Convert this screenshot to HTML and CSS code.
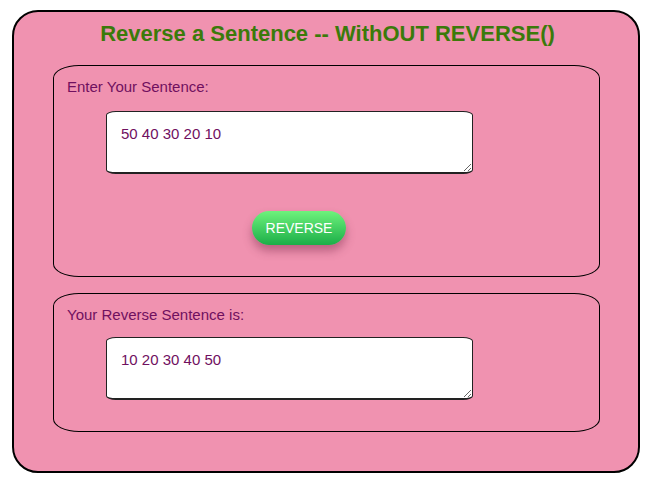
FILE: index.html
```html
<!DOCTYPE html>
<html lang="en">
<head>
<meta charset="utf-8">
<title>Reverse a Sentence</title>
<link rel="stylesheet" href="styles.css">
</head>
<body>
<div class="app">
  <h1 class="title">Reverse a Sentence -- WithOUT REVERSE()</h1>
  <div class="panel panel-input">
    <label class="label" for="src">Enter Your Sentence:</label>
    <textarea id="src" class="field">50 40 30 20 10</textarea>
    <button class="btn" type="button">REVERSE</button>
  </div>
  <div class="panel panel-output">
    <label class="label" for="out">Your Reverse Sentence is:</label>
    <textarea id="out" class="field">10 20 30 40 50</textarea>
  </div>
</div>
</body>
</html>
```
FILE: styles.css
```css
* { box-sizing: border-box; }
html, body { margin: 0; padding: 0; background: #ffffff; }
body {
  padding: 10px 0 0 12px;
  font-family: "Liberation Sans", Arial, sans-serif;
}
.app {
  width: 628px;
  height: 463px;
  background: #f092b0;
  border: 2px solid #000;
  border-radius: 26px;
  padding: 10px 38px 0 39px;
  display: flex;
  flex-direction: column;
}
.title {
  margin: 0;
  font-size: 22px;
  line-height: 24px;
  font-weight: bold;
  color: #3b7a0a;
  text-align: center;
  padding-left: 2px;
}
.panel {
  border: 1px solid #000;
  border-radius: 26px / 13px;
  padding: 12px 0 0 13px;
  display: flex;
  flex-direction: column;
  align-items: flex-start;
}
.panel-input { margin-top: 19px; height: 212px; }
.panel-output { margin-top: 16px; height: 139px; }
.label {
  font-size: 15px;
  line-height: 17px;
  color: #70105f;
}
.field {
  margin: 16px 0 0 39px;
  width: 367px;
  height: 63px;
  border: 1px solid #222;
  border-bottom-width: 2px;
  border-radius: 10px / 4px;
  background: #fff;
  padding: 13px 14px;
  font-family: "Liberation Sans", Arial, sans-serif;
  font-size: 15px;
  line-height: 17px;
  color: #70105f;
  resize: both;
  outline: none;
}
.panel-output .field { margin-top: 14px; }
.btn {
  margin: 37px 0 0 185px;
  width: 94px;
  height: 34px;
  border: none;
  border-radius: 17px;
  background: linear-gradient(to bottom, #6ef27c, #1cae48);
  color: #fff;
  font-family: "Liberation Sans", Arial, sans-serif;
  font-size: 14px;
  box-shadow: 0 6px 10px rgba(120, 40, 70, 0.45);
  cursor: pointer;
}
```
